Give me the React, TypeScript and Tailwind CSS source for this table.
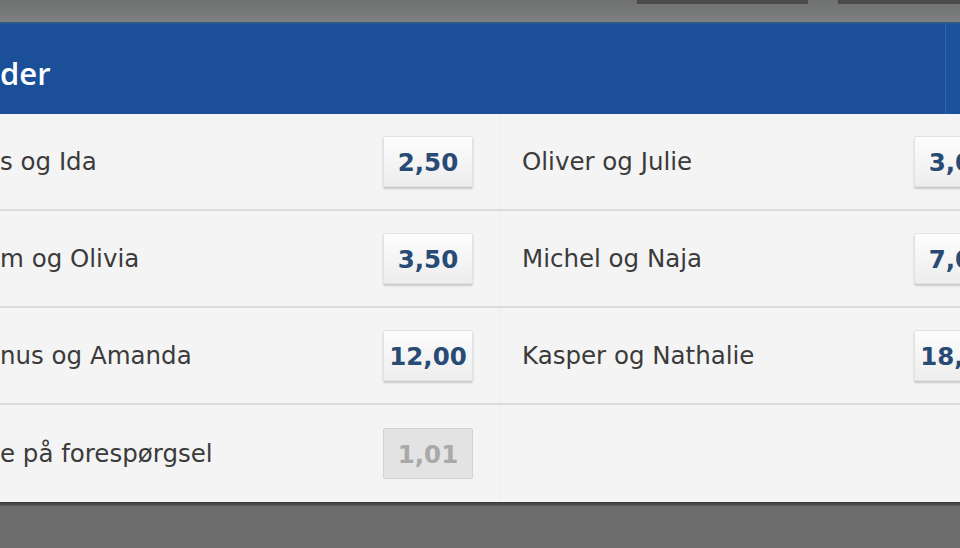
import React from 'react';

type Pick = { name: string; odds: string; disabled?: boolean };

const rows: [Pick, Pick | null][] = [
  [{ name: 's og Ida', odds: '2,50' }, { name: 'Oliver og Julie', odds: '3,00' }],
  [{ name: 'm og Olivia', odds: '3,50' }, { name: 'Michel og Naja', odds: '7,00' }],
  [{ name: 'nus og Amanda', odds: '12,00' }, { name: 'Kasper og Nathalie', odds: '18,00' }],
  [{ name: 'e på forespørgsel', odds: '1,01', disabled: true }, null],
];

const OddsButton = ({ odds, disabled }: { odds: string; disabled?: boolean }) => (
  <div
    className={`w-[90px] h-[51px] shrink-0 flex items-center justify-center pt-[3px] rounded-[2px] text-[24.5px] font-bold ${
      disabled
        ? 'bg-[#e3e3e3] border border-[#d2d2d2] text-[#a9a9a9]'
        : 'bg-gradient-to-b from-[#fdfdfd] to-[#ededed] border border-[#e2e2e2] text-[#274b74] shadow-[0_2px_2px_rgba(0,0,0,0.18)]'
    }`}
    style={{ fontFamily: '"DejaVu Sans", Verdana, sans-serif' }}
  >
    {odds}
  </div>
);

export default function App() {
  return (
    <div className="w-[960px] h-[548px] overflow-hidden bg-[#6c6c6c] flex flex-col" style={{ fontFamily: '"DejaVu Sans", Verdana, sans-serif' }}>
      {/* top strip */}
      <div className="h-[22px] shrink-0 bg-gradient-to-b from-[#6f7170] to-[#7f8180] flex items-start">
        <div className="ml-[637px] w-[171px] h-[4px] bg-[#4b494b]" />
        <div className="ml-[30px] w-[122px] h-[4px] bg-[#4b494b]" />
      </div>

      {/* header */}
      <div className="h-[92px] shrink-0 bg-[#1b4f97] border-t-2 border-[#2a5a8a] flex">
        <div className="w-[945px] flex items-center">
          <span className="text-white text-[31px] font-semibold leading-none mt-[9px]" style={{ fontFamily: '"Open Sans", "Noto Sans", sans-serif' }}>
            der
          </span>
        </div>
        <div className="w-px bg-[#2c63aa]" />
        <div className="flex-1 bg-[#1c519b]" />
      </div>

      {/* body */}
      <div className="bg-[#f4f4f4] shrink-0">
        {rows.map(([left, right], i) => (
          <div key={i} className={`flex h-[97px] ${i < rows.length - 1 ? 'border-b-2 border-[#dcdcdc]' : ''}`}>
            <div className="w-[500px] shrink-0 flex items-center border-r border-[#eeeeee]">
              <div className="w-[383px] text-[24.5px] text-[#3b3b3b] pt-[2px]">{left.name}</div>
              <OddsButton odds={left.odds} disabled={left.disabled} />
            </div>
            {right && (
              <div className="flex items-center pl-[22px]">
                <div className="w-[392px] shrink-0 text-[24.5px] text-[#3b3b3b] pt-[2px]">{right.name}</div>
                <OddsButton odds={right.odds} />
              </div>
            )}
          </div>
        ))}
      </div>

      {/* bottom */}
      <div className="h-[4px] shrink-0 bg-gradient-to-b from-[#3a3a3a] to-[#5a5a5a]" />
      <div className="flex-1 bg-[#6c6c6c]" />
    </div>
  );
}
